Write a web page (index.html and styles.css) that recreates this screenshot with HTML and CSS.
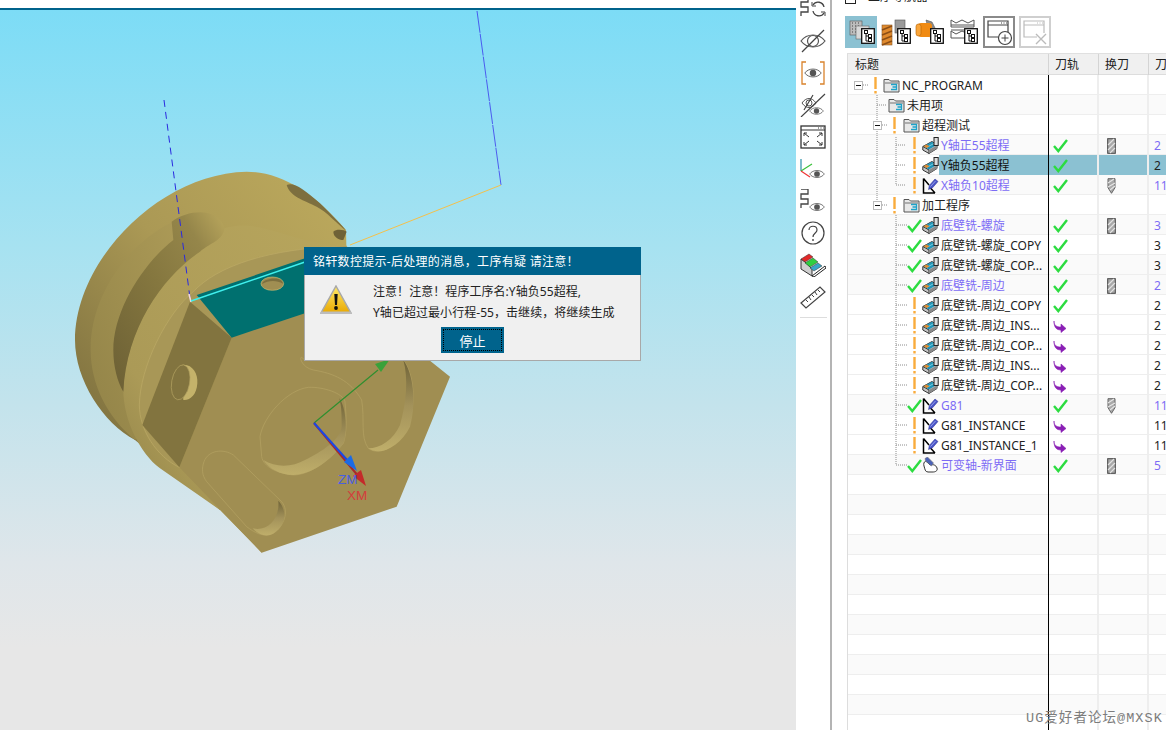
FILE: index.html
```html
<!DOCTYPE html>
<html lang="zh">
<head>
<meta charset="utf-8">
<title>工序导航器</title>
<link rel="stylesheet" href="styles.css">
</head>
<body>
<svg class="sprite" aria-hidden="true">
  <defs>
    <linearGradient id="gBody" x1="0" y1="1" x2="1" y2="0"><stop offset="0" stop-color="#6f6337"/><stop offset=".55" stop-color="#ab9955"/><stop offset="1" stop-color="#bdaa5d"/></linearGradient>
    <linearGradient id="gRing" x1="0" y1=".8" x2="1" y2="0"><stop offset="0" stop-color="#948549"/><stop offset="1" stop-color="#ae9c58"/></linearGradient>
    <linearGradient id="gWall" x1="0" y1="1" x2="1" y2="0"><stop offset="0" stop-color="#6c6035"/><stop offset=".5" stop-color="#85773f"/><stop offset=".8" stop-color="#95864a"/><stop offset="1" stop-color="#baa75d"/></linearGradient>
    <linearGradient id="gDisc" x1="0" y1="1" x2="1" y2="0"><stop offset="0" stop-color="#8a7c43"/><stop offset=".3" stop-color="#ab9a57"/><stop offset="1" stop-color="#b8a65d"/></linearGradient>
    <linearGradient id="gShade" x1="0" y1="0" x2="0" y2="1"><stop offset="0" stop-color="#6f6338"/><stop offset=".5" stop-color="#a3925a"/><stop offset="1" stop-color="#bfae6a"/></linearGradient>
    <linearGradient id="gWarn" x1="0" y1="0" x2="0" y2="1"><stop offset="0" stop-color="#ffe96a"/><stop offset="1" stop-color="#e9a800"/></linearGradient>

    <symbol id="folder" viewBox="0 0 17 15"><path d="M1 3V1.500h5L7.500 3H16v11H1z" fill="#e8e8e8" stroke="#555"/><path d="M1.500 5h14" stroke="#9a9a9a" stroke-width="1.500"/><path d="M8 6.500h5.500v2.500H9.500M13.500 9v2.500H8" fill="none" stroke="#1fa3c9" stroke-width="1.300"/></symbol>

    <symbol id="mill" viewBox="0 0 17 17"><path d="M.8 9.500L10 4.500l5 3.500v3.500L7 16.500l-6.200-3.500z" fill="#c4c4c4" stroke="#333" stroke-width="1"/><path d="M1 9.500l6 3.500v3.500" fill="none" stroke="#333" stroke-width="1"/><path d="M7 13l8-4.700v3.200l-8 5z" fill="#8a8a8a"/><path d="M1.500 9.300L10 4.800l4.500 3.300L7 12.500z" fill="#2195b8"/><path d="M4.500 10.500l8-4.300" stroke="#8fd6e4" stroke-width=".8"/><path d="M1.500 9.300l3 1.700 3-1.700-3-1.800z" fill="#e08a30"/><rect x="12" y=".5" width="4.200" height="8" fill="#dcdcdc" stroke="#222" stroke-width="1"/></symbol>

    <symbol id="drillop" viewBox="0 0 17 17"><path d="M1.500 1.500V16H13M1.500 1.500L7 8M13 16L8.500 11" fill="none" stroke="#000" stroke-width="1.500"/><path d="M6.500 12.500L7.300 8.500 13 2l3 2.500-5.500 6.300z" fill="#4a55c8" stroke="#2b2f8a" stroke-width=".5"/><path d="M8.500 9.500l5-5.500" stroke="#a9b2ee" stroke-width=".8"/></symbol>

    <symbol id="varaxis" viewBox="0 0 17 17"><path d="M2 9C1 6 3 3 5 5l3 3c3-1 6 0 7 3 1 3-2 4-4 4H6C3 15 3 12 2 9z" fill="#fff" stroke="#333" stroke-width="1"/><path d="M3 1.500L5.500 0l6 6-2 3L3.500 4z" fill="#4a62b8" stroke="#7a7a7a" stroke-width=".6"/></symbol>

    <symbol id="check" viewBox="0 0 15 15"><path d="M1 8l4.300 5L14 2" fill="none" stroke="#2cdc40" stroke-width="2.400"/></symbol>

    <symbol id="bang" viewBox="0 0 3 17"><rect width="2.400" height="12" x=".3" y="0" fill="#f9ac3c"/><rect width="2.400" height="2.500" x=".3" y="14" fill="#f9ac3c"/></symbol>

    <symbol id="turn" viewBox="0 0 14 13"><path d="M1 1c0 4 2 6 7 6V4l5 4.500L8 12.500V10C3 10 1 7 1 1z" fill="#8a1fb5" stroke="#8a1fb5" stroke-width=".6"/></symbol>

    <symbol id="endmill" viewBox="0 0 9 16"><rect x=".7" y=".7" width="7.600" height="14.600" fill="#a9a9a9" stroke="#444"/><path d="M1 7l6-6M1 12L8 5M3 15l5-5" stroke="#e2e2e2" stroke-width="1.100"/></symbol>

    <symbol id="drill" viewBox="0 0 9 16"><path d="M1 .7h7v9L4.500 15.300 1 9.700z" fill="#a9a9a9" stroke="#666"/><path d="M1 5l6-4M1 9l7-4M3 12l5-4" stroke="#e6e6e6" stroke-width="1.100"/></symbol>

    <symbol id="treebadge" viewBox="0 0 14 16"><rect x=".7" y=".7" width="12.600" height="14.600" fill="#fff" stroke="#111" stroke-width="1.300"/><path d="M5 3v10h3M5 8h3" fill="none" stroke="#111"/><rect x="3.500" y="2.500" width="3" height="3" fill="#fff" stroke="#111"/><rect x="7.500" y="6.500" width="3" height="3" fill="#fff" stroke="#111"/><rect x="7.500" y="10.500" width="3" height="3" fill="#fff" stroke="#111"/></symbol>

    <symbol id="eye" viewBox="0 0 24 16"><path d="M1 8C6 1 18 1 23 8 18 15 6 15 1 8z" fill="#fff" stroke="#555" stroke-width="1.200"/><circle cx="12" cy="8" r="4.300" fill="#555"/></symbol>
    <symbol id="seq" viewBox="0 0 13 20"><path d="M1 0h7v5H1v5h7v5H1v4" fill="none" stroke="#444" stroke-width="1.300"/></symbol>
  </defs>
</svg>

<div class="app">
  <main class="viewport">
    <svg class="scene" viewBox="0 0 796 730">
      <g transform="translate(60 160) scale(.33333)">
        <path fill="url(#gBody)" d="M858 210C760 95 660 35 560 35 300 40 45 300 45 540c0 120 85 250 180 300l255 210 380-750z"/>
        <path fill="url(#gRing)" d="M335 187C190 260 90 420 92 570c0 100 48 200 133 270l175-240V260z"/>
        <path fill="url(#gDisc)" d="M493 205c-3 35-43 45-73 70C310 350 200 500 190 690c0 90 50 190 110 235l180 125 125 128 255-578V258C700 255 600 170 493 205z"/>
        <path fill="url(#gWall)" d="M335 185c55-40 145-40 158 20-3 35-43 45-73 70C310 350 200 500 190 695c-18-30-30-75-30-125 0-120 90-260 180-330z"/>
        <path fill="#a89757" stroke="#bcaa66" stroke-width="2" d="M400 395C470 320 620 265 860 258V600L358 922C290 890 238 810 238 735 240 620 320 460 400 395z"/>
        <path fill="#7d6f3f" d="M680 75c20-10 50 10 100 55 40 40 70 70 78 82-28-22-58-57-88-72-40-20-80-30-90-65z"/>
        <path fill="#6f6237" d="M820 215c10-10 35-5 40 0l-10 25c-15 0-30-10-30-25z"/>
        <path fill="#a08e52" d="M515 533l220-73 70-120 305 262 60 48-160 390-405 138-247-256z"/>
        <path fill="#82743f" d="M390 425l125 108-157 389-111-127z"/>
        <path fill="#00706f" d="M410 405l325-110v165l-220 73z"/>
        <ellipse cx="637" cy="371" rx="34" ry="20" fill="#a08e52" stroke="#c9b96e" stroke-width="2"/>
        <path fill="#7d6f3f" d="M606 372c2-12 30-20 50-15 10 4 13 10 13 14-20-12-45-10-63 1z"/>
        <path fill="#c4b26a" d="M365 615c30-5 50 25 47 55-2 35-22 52-42 50z"/>
        <ellipse cx="362" cy="667" rx="27" ry="53" transform="rotate(10 362 667)" fill="#82743f" stroke="#b5a363" stroke-width="2"/>
        <path fill="none" stroke="#b5a363" stroke-width="2" d="M432 905c13-35 58-40 88-20l145 140c25 30 5 75-25 95-30 15-60-5-80-20L440 965c-15-20-15-40-8-60z"/>
        <path fill="url(#gShade)" d="M655 1022c35 38 15 88-25 103-20 5-40-5-52-20 42 10 82-25 77-83z"/>
        <path fill="none" stroke="#b5a363" stroke-width="2" d="M600 830c10-60 80-140 145-148 45-2 105 18 110 43 5 55 5 95-5 125-40 50-100 95-150 95-50-5-90-25-95-55z"/>
        <path fill="url(#gShade)" d="M838 715c22 30 24 105 12 135-40 55-100 95-150 95-40 0-75-20-90-45 40 25 90 20 125 0 50-25 105-60 110-100 0-30 0-60-7-85z"/>
        <path fill="none" stroke="#b5a363" stroke-width="2" d="M735 603c-20-33-20 17 25 27 60 10 110 30 145 90 10 60-5 110 20 145 35 25 85-5 120-65 25-80 15-160-15-200"/>
        <path fill="url(#gShade)" d="M1030 600c30 40 40 130 20 200-30 60-90 90-125 65 35 0 75-25 95-70 20-70 25-140 10-195z"/>
      </g>
      <path class="ln-blue" d="M164 100l26 198"/>
      <path class="ln-blue-thin" d="M477 11l24 174"/>
      <path class="ln-orange" d="M501 185L350 245"/>
      <path class="ln-tick" d="M189 294l2 8"/>
      <path class="ln-cyan" d="M191 301L305 262"/>
      <path class="ln-green" d="M314 423l64-53"/>
      <path class="fill-green" d="M390 359l-15 5 6 8z"/>
      <path class="ln-red" d="M314 423l45 54"/>
      <path class="fill-red" d="M366 486l-13-10 8-6z"/>
      <path class="ln-axis-blue" d="M314 423l34 38"/>
      <path class="fill-blue" d="M344 462l7-7 6 16z"/>
      <text class="t-zm" x="338" y="484">ZM</text>
      <text class="t-xm" x="347" y="500">XM</text>
    </svg>

    <section class="dialog">
      <header class="dlg-title">铭轩数控提示-后处理的消息<span class="pn">，</span>工序有疑 请注意<span class="pn">！</span></header>
      <div class="dlg-body">
        <svg class="warn" viewBox="0 0 32 30"><path d="M16 1L31 28H1z" fill="url(#gWarn)" stroke="#a8a8a8" stroke-width="1.500"/><path d="M1 26.500h30V29H1z" fill="#bdbdbd"/><path d="M14.300 9h3.400l-.7 11h-2z" fill="#111"/><circle cx="16" cy="23" r="1.900" fill="#111"/></svg>
        <div class="dlg-msg">
          <p>注意<span class="pn">！</span>注意<span class="pn">！</span>程序工序名:Y轴负55超程,</p>
          <p>Y轴已超过最小行程-55<span class="pn">，</span>击继续<span class="pn">，</span>将继续生成</p>
        </div>
      </div>
      <div class="dlg-actions"><button class="dlg-btn">停止</button></div>
    </section>
  </main>

  <aside class="strip">
    <div class="strip-cell"><svg class="s-ico" viewBox="0 0 26 24"><use href="#seq" x="0" y="0" width="13" height="20"/><path d="M24 10a6 6 0 0 0-11-2M13 14a6 6 0 0 0 11 2" fill="none" stroke="#444" stroke-width="1.300"/><path d="M12 5v4h4M25 19v-4h-4" fill="none" stroke="#444"/></svg></div>
    <div class="strip-cell"><svg class="s-ico" viewBox="0 0 26 24"><path d="M1 12C7 4 19 4 25 12 19 20 7 20 1 12z" fill="#fff" stroke="#555" stroke-width="1.200"/><circle cx="13" cy="12" r="5.500" fill="none" stroke="#555" stroke-width="1.200"/><path d="M2 23L24 1" stroke="#444" stroke-width="1.300"/></svg></div>
    <div class="strip-cell"><svg class="s-ico" viewBox="0 0 26 24"><path d="M6 1H2v22h4M20 1h4v22h-4" fill="none" stroke="#d9822b" stroke-width="1.300"/><use href="#eye" x="4" y="5" width="18" height="14"/></svg></div>
    <div class="strip-cell"><svg class="s-ico" viewBox="0 0 26 24"><path d="M2 10c4-6 10-6 14 0-4 6-10 6-14 0z" fill="#fff" stroke="#555"/><circle cx="9" cy="10" r="3" fill="none" stroke="#555"/><path d="M4 17L13 2M1 24L25 1" stroke="#444" stroke-width="1.200"/><use href="#eye" x="9" y="13" width="15" height="10"/></svg></div>
    <div class="strip-cell"><svg class="s-ico" viewBox="0 0 26 24"><rect x="1" y="1" width="24" height="22" fill="#fff" stroke="#333" stroke-width="1.300"/><path d="M1 5h24" stroke="#333"/><path d="M18 3h1M20.500 3h1M23 3h.8" stroke="#333"/><path d="M4 8l5 4M4 8v3M4 8h3M22 8l-5 4M22 8v3M22 8h-3M4 20l5-4M4 20v-3M4 20h3M22 20l-5-4M22 20v-3M22 20h-3" fill="none" stroke="#333"/></svg></div>
    <div class="strip-cell"><svg class="s-ico" viewBox="0 0 26 24"><path d="M1 14V2" stroke="#2a8fa8" stroke-width="1.200"/><path d="M1 14l11-7" stroke="#3ac13a" stroke-width="1.200"/><path d="M1 14l9 6" stroke="#e33" stroke-width="1.200"/><use href="#eye" x="9" y="11" width="16" height="12"/></svg></div>
    <div class="strip-cell"><svg class="s-ico" viewBox="0 0 26 24"><use href="#seq" x="0" y="0" width="13" height="20"/><use href="#eye" x="9" y="12" width="16" height="12"/></svg></div>
    <div class="strip-cell"><svg class="s-ico" viewBox="0 0 26 24"><circle cx="13" cy="12" r="11" fill="#fff" stroke="#444" stroke-width="1.200"/><path d="M9 9c0-5 8-5 8 0 0 3-4 3-4 7" fill="none" stroke="#444" stroke-width="1.200"/><circle cx="13" cy="19" r=".9" fill="#444"/></svg></div>
    <div class="strip-cell"><svg class="s-ico" viewBox="0 0 26 24"><path d="M1 6v10l11 7V16L5 9z" fill="#cfcfcf" stroke="#333"/><path d="M1 6l8-5 4 3-8 5z" fill="#e22929" stroke="#333" stroke-width=".5"/><path d="M5 10l8-5 5 4-8 5z" fill="#2fcf3f" stroke="#333" stroke-width=".5"/><path d="M10 15l8-5 4 3-8 5z" fill="#39a5c8" stroke="#333" stroke-width=".5"/><path d="M12 23L25 13l1 2-12 9z" fill="#fff" stroke="#222"/></svg></div>
    <div class="strip-cell"><svg class="s-ico" viewBox="0 0 26 24"><path d="M1 18L20 2l5 5L6 23z" fill="#fff" stroke="#444" stroke-width="1.200"/><path d="M6 15l2 2M9 12l2 3M12 10l2 2M15 7l2 3M18 5l2 2" stroke="#444"/></svg></div>
    <div class="strip-sep"></div>
  </aside>

  <section class="panel">
    <div class="navhead"><span class="navcheck"></span><span class="navtitle">工序导航器</span></div>
    <div class="tools">
      <div class="tool active"><svg viewBox="0 0 32 32"><rect x="5" y="5" width="12" height="14" fill="#bcbcbc" stroke="#555" stroke-width=".6"/><path d="M7 7h1M10 7h1M13 7h1M7 10h1M10 10h1M13 10h1M7 13h1M10 13h1M13 13h1M7 16h1M10 16h1" stroke="#444"/><rect x="11" y="10" width="13" height="13" fill="#d8d8d8" stroke="#666" stroke-width=".6"/><use href="#treebadge" x="16" y="12" width="14" height="16"/></svg></div>
      <div class="tool"><svg viewBox="0 0 32 32"><rect x="16" y="4" width="10" height="13" fill="#9a9a9a" stroke="#555" stroke-width=".6"/><rect x="3" y="9" width="10" height="20" fill="#e08a2e" stroke="#8b5a2b" stroke-width=".6"/><path d="M3 14l10-4M3 19l10-4M3 24l10-4M3 29l10-4" stroke="#8b4e16" stroke-width="1.400"/><use href="#treebadge" x="18" y="12" width="14" height="16"/></svg></div>
      <div class="tool"><svg viewBox="0 0 32 32"><path d="M13 4l6 2 7 14-8 4z" fill="#8a8a8a" stroke="#555" stroke-width=".6"/><rect x="5" y="7" width="14" height="14" rx="3" fill="#f08a12"/><rect x="3" y="8" width="5" height="12" rx="2.500" fill="#f9a53a" stroke="#b35f00" stroke-width=".6"/><use href="#treebadge" x="17" y="12" width="14" height="16"/></svg></div>
      <div class="tool"><svg viewBox="0 0 32 32"><path d="M4 4l5 3 6-3 6 3 6-3v7H4zM4 15l5 3 6-3 6 3 6-3v7H4z" fill="#fff" stroke="#555"/><path d="M4 9h23M4 14h13" stroke="#555"/><use href="#treebadge" x="17" y="12" width="14" height="16"/></svg></div>
      <div class="tool framed"><svg viewBox="0 0 28 28"><path d="M16 19H3V3h20v12" fill="none" stroke="#444" stroke-width="1.200"/><path d="M3 7h20" stroke="#444"/><path d="M16 5h1M18.500 5h1M21 5h1" stroke="#444"/><circle cx="20" cy="20" r="6.500" fill="#fff" stroke="#444" stroke-width="1.200"/><path d="M16.500 20h7M20 16.500v7" stroke="#444"/></svg></div>
      <div class="tool framed off"><svg viewBox="0 0 28 28"><path d="M16 19H3V3h20v12" fill="none" stroke="#bbb" stroke-width="1.200"/><path d="M3 7h20" stroke="#bbb"/><path d="M16 5h1M18.500 5h1M21 5h1" stroke="#bbb"/><path d="M15 16l10 10M25 16L15 26" stroke="#bbb" stroke-width="1.400"/></svg></div>
    </div>

    <div class="grid">
      <div class="g-head"><span class="h-cell">标题</span><span class="h-cell">刀轨</span><span class="h-cell">换刀</span><span class="h-cell">刀</span></div>
      <div class="g-body">
        <svg class="connectors" viewBox="0 0 318 660">
          <path d="M15 10h5M34 50h5M34 130h5M29 20V126M29 30h9M48 62v48M48 70h10M48 90h10M48 110h10M48 140v250M48 150h11M48 170h11M48 190h11M48 210h11M48 230h11M48 250h11M48 270h11M48 290h11M48 310h11M48 330h11M48 350h11M48 370h11M48 390h11"/>
        </svg>
        <div class="row"><div class="tree root"><span class="box"></span><span class="stat"><svg class="bang"><use href="#bang"/></svg></span><svg class="fld"><use href="#folder"/></svg><span class="lbl">NC_PROGRAM</span></div><i></i><i></i><i></i></div>
        <div class="row alt"><div class="tree unused"><svg class="fld"><use href="#folder"/></svg><span class="lbl">未用项</span></div><i></i><i></i><i></i></div>
        <div class="row"><div class="tree group"><span class="box"></span><span class="stat"><svg class="bang"><use href="#bang"/></svg></span><svg class="fld"><use href="#folder"/></svg><span class="lbl">超程测试</span></div><i></i><i></i><i></i></div>
        <div class="row alt link"><div class="tree op"><span class="stat"><svg class="bang"><use href="#bang"/></svg></span><svg class="ico"><use href="#mill"/></svg><span class="lbl">Y轴正55超程</span></div><i><svg class="ck"><use href="#check"/></svg></i><i><svg class="tl"><use href="#endmill"/></svg></i><i class="num">2</i></div>
        <div class="row sel"><div class="tree op"><span class="stat"><svg class="bang"><use href="#bang"/></svg></span><svg class="ico"><use href="#mill"/></svg><span class="lbl">Y轴负55超程</span></div><i><svg class="ck"><use href="#check"/></svg></i><i></i><i class="num">2</i></div>
        <div class="row alt link"><div class="tree op"><span class="stat"><svg class="bang"><use href="#bang"/></svg></span><svg class="ico"><use href="#drillop"/></svg><span class="lbl">X轴负10超程</span></div><i><svg class="ck"><use href="#check"/></svg></i><i><svg class="tl"><use href="#drill"/></svg></i><i class="num">11</i></div>
        <div class="row"><div class="tree group"><span class="box"></span><span class="stat"><svg class="bang"><use href="#bang"/></svg></span><svg class="fld"><use href="#folder"/></svg><span class="lbl">加工程序</span></div><i></i><i></i><i></i></div>
        <div class="row alt link"><div class="tree op"><span class="stat"><svg class="ckm"><use href="#check"/></svg></span><svg class="ico"><use href="#mill"/></svg><span class="lbl">底壁铣-螺旋</span></div><i><svg class="ck"><use href="#check"/></svg></i><i><svg class="tl"><use href="#endmill"/></svg></i><i class="num">3</i></div>
        <div class="row"><div class="tree op"><span class="stat"><svg class="ckm"><use href="#check"/></svg></span><svg class="ico"><use href="#mill"/></svg><span class="lbl">底壁铣-螺旋_COPY</span></div><i><svg class="ck"><use href="#check"/></svg></i><i></i><i class="num">3</i></div>
        <div class="row alt"><div class="tree op"><span class="stat"><svg class="ckm"><use href="#check"/></svg></span><svg class="ico"><use href="#mill"/></svg><span class="lbl">底壁铣-螺旋_COP...</span></div><i><svg class="ck"><use href="#check"/></svg></i><i></i><i class="num">3</i></div>
        <div class="row alt link"><div class="tree op"><span class="stat"><svg class="ckm"><use href="#check"/></svg></span><svg class="ico"><use href="#mill"/></svg><span class="lbl">底壁铣-周边</span></div><i><svg class="ck"><use href="#check"/></svg></i><i><svg class="tl"><use href="#endmill"/></svg></i><i class="num">2</i></div>
        <div class="row"><div class="tree op"><span class="stat"><svg class="bang"><use href="#bang"/></svg></span><svg class="ico"><use href="#mill"/></svg><span class="lbl">底壁铣-周边_COPY</span></div><i><svg class="ck"><use href="#check"/></svg></i><i></i><i class="num">2</i></div>
        <div class="row"><div class="tree op"><span class="stat"><svg class="bang"><use href="#bang"/></svg></span><svg class="ico"><use href="#mill"/></svg><span class="lbl">底壁铣-周边_INS...</span></div><i><svg class="tn"><use href="#turn"/></svg></i><i></i><i class="num">2</i></div>
        <div class="row"><div class="tree op"><span class="stat"><svg class="bang"><use href="#bang"/></svg></span><svg class="ico"><use href="#mill"/></svg><span class="lbl">底壁铣-周边_COP...</span></div><i><svg class="tn"><use href="#turn"/></svg></i><i></i><i class="num">2</i></div>
        <div class="row"><div class="tree op"><span class="stat"><svg class="bang"><use href="#bang"/></svg></span><svg class="ico"><use href="#mill"/></svg><span class="lbl">底壁铣-周边_INS...</span></div><i><svg class="tn"><use href="#turn"/></svg></i><i></i><i class="num">2</i></div>
        <div class="row"><div class="tree op"><span class="stat"><svg class="bang"><use href="#bang"/></svg></span><svg class="ico"><use href="#mill"/></svg><span class="lbl">底壁铣-周边_COP...</span></div><i><svg class="tn"><use href="#turn"/></svg></i><i></i><i class="num">2</i></div>
        <div class="row alt link"><div class="tree op"><span class="stat"><svg class="ckm"><use href="#check"/></svg></span><svg class="ico"><use href="#drillop"/></svg><span class="lbl">G81</span></div><i><svg class="ck"><use href="#check"/></svg></i><i><svg class="tl"><use href="#drill"/></svg></i><i class="num">11</i></div>
        <div class="row"><div class="tree op"><span class="stat"><svg class="bang"><use href="#bang"/></svg></span><svg class="ico"><use href="#drillop"/></svg><span class="lbl">G81_INSTANCE</span></div><i><svg class="tn"><use href="#turn"/></svg></i><i></i><i class="num">11</i></div>
        <div class="row"><div class="tree op"><span class="stat"><svg class="bang"><use href="#bang"/></svg></span><svg class="ico"><use href="#drillop"/></svg><span class="lbl">G81_INSTANCE_1</span></div><i><svg class="tn"><use href="#turn"/></svg></i><i></i><i class="num">11</i></div>
        <div class="row alt link"><div class="tree op"><span class="stat"><svg class="ckm"><use href="#check"/></svg></span><svg class="ico"><use href="#varaxis"/></svg><span class="lbl">可变轴-新界面</span></div><i><svg class="ck"><use href="#check"/></svg></i><i><svg class="tl"><use href="#endmill"/></svg></i><i class="num">5</i></div>
        <div class="row"><div class="tree"></div><i></i><i></i><i></i></div>
        <div class="row alt"><div class="tree"></div><i></i><i></i><i></i></div>
        <div class="row"><div class="tree"></div><i></i><i></i><i></i></div>
        <div class="row alt"><div class="tree"></div><i></i><i></i><i></i></div>
        <div class="row"><div class="tree"></div><i></i><i></i><i></i></div>
        <div class="row alt"><div class="tree"></div><i></i><i></i><i></i></div>
        <div class="row"><div class="tree"></div><i></i><i></i><i></i></div>
        <div class="row alt"><div class="tree"></div><i></i><i></i><i></i></div>
        <div class="row"><div class="tree"></div><i></i><i></i><i></i></div>
        <div class="row alt"><div class="tree"></div><i></i><i></i><i></i></div>
        <div class="row"><div class="tree"></div><i></i><i></i><i></i></div>
        <div class="row alt"><div class="tree"></div><i></i><i></i><i></i></div>
        <div class="row"><div class="tree"></div><i></i><i></i><i></i></div>
      </div>
    </div>
  </section>
  <div class="watermark">UG爱好者论坛@MXSK</div>
</div>
</body>
</html>
```

FILE: styles.css
```css
* { box-sizing: border-box; }
html, body { margin: 0; height: 730px; overflow: hidden; background: #fff; }
body { font: 12px "Noto Sans", "Noto Sans CJK SC", sans-serif; color: #222; }
.sprite { position: absolute; width: 0; height: 0; }
.app { position: relative; display: flex; width: 1166px; height: 730px; overflow: hidden; }

/* 3D viewport */
.viewport {
  position: relative; flex: 0 0 796px; height: 730px; border-top: 8px solid #fff;
  background: linear-gradient(#7cdcf6 0, #a6e2f1 235px, #c3e3ec 395px, #dfe6ea 555px, #e7e7e7 640px, #e7e7e7 100%);
}
.viewport::before { content: ""; display: block; height: 2px; background: #00638c; }
.scene { position: absolute; left: 0; top: -8px; width: 796px; height: 730px; }
.ln-blue { stroke: #2a2ae0; stroke-width: 1; stroke-dasharray: 7 5; fill: none; }
.ln-blue-thin { stroke: #3a3aee; stroke-width: .8; fill: none; stroke-dasharray: 22 1; }
.ln-orange { stroke: #f5c04a; stroke-width: 1; fill: none; }
.ln-tick { stroke: #f4d9e0; stroke-width: 1.5; }
.ln-cyan { stroke: #3ff0ee; stroke-width: 1.4; }
.ln-green { stroke: #2f8f2f; stroke-width: 1.2; }
.ln-red { stroke: #a82a2a; stroke-width: 2; }
.ln-axis-blue { stroke: #1a47e6; stroke-width: 2; }
.fill-green { fill: #3aa13a; }
.fill-red { fill: #c42a2a; }
.fill-blue { fill: #1a6be6; }
.t-zm, .t-xm { font: 13.500px "Liberation Sans", sans-serif; }
.t-zm { fill: #4a5fe0; }
.t-xm { fill: #d43c3c; }

/* dialog */
.dialog {
  position: absolute; left: 304px; top: 239px; width: 337px; height: 114px;
  display: flex; flex-direction: column; background: #f0f0f0; border: 1px solid #a8a8a8; border-top: 0;
}
.dlg-title { height: 28px; margin: 0 -1px; padding: 0 9px; line-height: 27px; background: #00638c; color: #fff; letter-spacing: .3px; white-space: nowrap; }
.pn { font-family: "Noto Sans CJK TC", sans-serif; font-feature-settings: "palt" 0, "halt" 0, "chws" 0; }
.dlg-body { display: flex; padding: 6px 0 0 15px; }
.warn { flex: 0 0 32px; width: 32px; height: 30px; margin: 4px 21px 0 0; }
.dlg-msg p { margin: 0; line-height: 20px; color: #222; letter-spacing: .05px; }
.dlg-actions { display: flex; justify-content: center; margin-top: 4px; }
.dlg-btn {
  width: 63px; height: 26px; padding: 0; background: #00638c; color: #fff; font: 13px "Noto Sans", "Noto Sans CJK SC", sans-serif;
  border: 3px solid #00638c; outline: 1px dotted #000; outline-offset: -3px;
}

/* vertical icon strip */
.strip { flex: 0 0 36px; height: 730px; border-right: 2px solid #b4b4b4; overflow: hidden; }
.strip-cell { height: 32px; display: flex; align-items: center; padding-left: 4px; }
.strip-cell:first-child { margin-top: -7px; }
.s-ico { width: 26px; height: 24px; }
.strip-sep { width: 27px; height: 1px; margin: 4px 0 0 4px; background: #ddd; }

/* navigator panel */
.panel { flex: 1; min-width: 0; height: 730px; padding-left: 13px; }
.navhead { display: flex; align-items: flex-end; gap: 12px; height: 6px; overflow: hidden; padding-bottom: 2px; }
.navcheck { flex: 0 0 11px; height: 11px; border: 1px solid #222; background: #fff; }
.navtitle { flex: none; line-height: 14px; }
.tools { display: flex; gap: 2px; height: 32px; margin-top: 10px; }
.tool { flex: 0 0 32px; height: 32px; }
.tool svg { display: block; width: 100%; height: 100%; }
.tool.active { background: #8bc1d2; }
.tool.framed { margin-left: 2px; border: 2px solid #8a8a8a; }
.tool.framed.off { border-color: #cfcfcf; }

.grid { margin: 5px 0 0 2px; border-left: 1px solid #ddd; border-top: 1px solid #e0e0e0; }
.g-head { display: grid; grid-template-columns: 201px 50px 50px 1fr; height: 21px; background: #f0f0f0; border-bottom: 1px solid #ddd; }
.h-cell { padding-left: 6px; line-height: 22px; border-right: 1px solid #d4d4d4; }
.h-cell:first-child { padding-left: 7px; }
.g-body { position: relative; }
.g-body::after { content: ""; position: absolute; left: 200px; top: 0; bottom: 0; width: 1px; background: #000; }
.connectors { position: absolute; left: 0; top: 0; width: 318px; height: 660px; overflow: visible; pointer-events: none; }
.connectors path { fill: none; stroke: #8c8c8c; stroke-width: 1; stroke-dasharray: 1 1; }
.row { display: grid; grid-template-columns: 201px 50px 50px 1fr; height: 20px; border-bottom: 1px solid #eee; color: #222; }
.row.alt { background: #fafafa; }
.row > i { position: relative; display: flex; align-items: center; font-style: normal; border-right: 2px solid #eee; }
.row > i:last-child { border-right: 0; }
.tree { display: flex; align-items: center; min-width: 0; white-space: nowrap; }
.tree.root { padding-left: 6px; }
.tree.unused { padding-left: 39px; }
.tree.group { padding-left: 25px; }
.tree.op { padding-left: 59px; }
.box { position: relative; flex: 0 0 9px; height: 9px; margin-right: 5px; border: 1px solid #bbb; background: #fff; }
.box::after { content: ""; position: absolute; left: 1px; top: 3px; width: 5px; height: 1px; background: #111; }
.stat { flex: 0 0 15px; display: flex; justify-content: center; align-items: center; height: 19px; }
.bang { width: 3px; height: 17px; }
.ckm { width: 15px; height: 15px; }
.fld { flex: 0 0 17px; height: 15px; margin: 0 0 0 1px; }
.root .fld { margin-right: 0; margin-left: 0; }
.ico { flex: 0 0 17px; height: 17px; }
.lbl { flex: 1; min-width: 0; align-self: stretch; padding: 1px 0 0 2px; line-height: 19px; overflow: hidden; }
.ck { width: 15px; height: 15px; margin: 1px 0 0 4px; }
.tn { width: 14px; height: 13px; margin: 3px 0 0 4px; }
.tl { width: 9px; height: 16px; margin: 1px 0 0 8px; }
.num { padding: 1px 0 0 5px; }
.link .lbl, .link .num { color: #7d6cf5; }
.sel > i { background: #8bc1d2; }
.sel .lbl { background: #8bc1d2; color: #111; }

.watermark {
  position: absolute; left: 1026px; top: 710px; color: #7c7c7c;
  font: 13.500px/17px "Liberation Mono", "Noto Sans CJK SC", monospace; letter-spacing: 1.050px; white-space: nowrap;
}
```
